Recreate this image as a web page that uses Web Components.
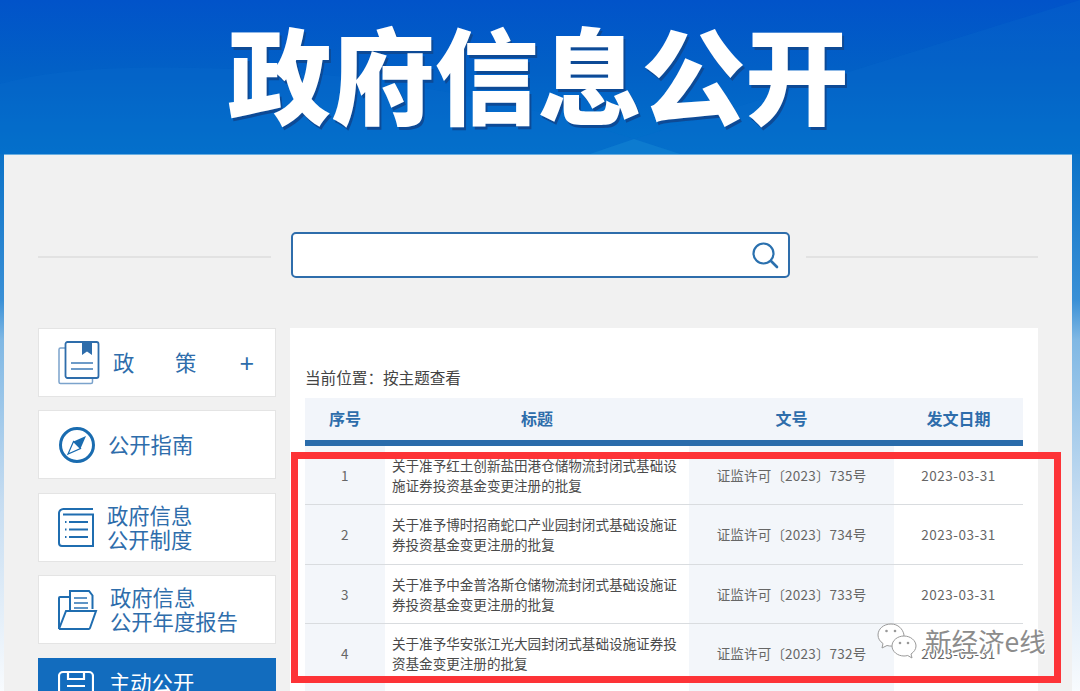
<!DOCTYPE html>
<html lang="zh">
<head>
<meta charset="utf-8">
<title>政府信息公开</title>
<style>
  html, body { margin: 0; height: 691px; overflow: hidden; background: #1070c4; }
  body { font-family: "Noto Sans CJK SC", "Liberation Sans", sans-serif; }
</style>
</head>
<body>
<gov-page></gov-page>

<script>
/* ================= ICONS ================= */
const ICONS = {
  book: `<svg width="42" height="44" viewBox="0 0 42 44" fill="none" stroke="#2e6dab" stroke-width="1.5">
    <path d="M7 7H2.500A1.500 1.500 0 0 0 1 8.500V41a1.500 1.500 0 0 0 1.500 1.500H33a1.500 1.500 0 0 0 1.500-1.500V37.500" stroke="#7ba3cc"/>
    <rect x="7.500" y="1" width="33" height="36" rx="2" stroke-width="1.800"/>
    <path d="M24 1h10v13l-5-3.500-5 3.500z" fill="#2e6dab" stroke="none"/>
    <path d="M13 22h22M13 28h22" stroke="#6d9bc8" stroke-width="1.800"/>
  </svg>`,
  compass: `<svg width="38" height="38" viewBox="0 0 38 38" fill="none">
    <circle cx="19" cy="19" r="16.500" stroke="#1a6cb0" stroke-width="3"/>
    <path d="M28 10 22.500 22.500 10 28l5.500-12.500z" fill="#1a6cb0"/>
    <path d="M15.500 15.500 22.500 22.500 10 28z" fill="#fff" stroke="#1a6cb0" stroke-width="1.200"/>
  </svg>`,
  list: `<svg width="36" height="40" viewBox="0 0 36 40" fill="none" stroke="#1f6db0" stroke-width="2">
    <path d="M35 2H6a4.500 4.500 0 0 0-5 5v29a3 3 0 0 0 3 3h31V7.500H5"/>
    <path d="M11 15h19M11 22.500h19M11 30h19"/>
    <path d="M7 15h1.500M7 22.500h1.500M7 30h1.500"/>
  </svg>`,
  folder: `<svg width="40" height="42" viewBox="0 0 40 42" fill="none" stroke="#1f6db0" stroke-width="2">
    <path d="M12 23V2h19l3.500 4.500V20"/>
    <path d="M16 9h13M16 14h14M16 19h14" stroke-width="2.200" stroke="#5f95c6"/>
    <path d="M11 8H2a1 1 0 0 0-1 1v31l7-18h30l-6 17a1.500 1.500 0 0 1-1.500 1H1"/>
  </svg>`,
  clip: `<svg width="36" height="40" viewBox="0 0 36 40" fill="none" stroke="#fff" stroke-width="2.200">
    <rect x="1" y="2" width="34" height="37" rx="4"/>
    <path d="M10 2v7h16V2M9 16h18"/>
  </svg>`
};

/* ================= BANNER ================= */
class GovBanner extends HTMLElement {
  constructor() {
    super();
    this.attachShadow({ mode: "open" });
    this.shadowRoot.innerHTML = `
      <style>
        :host {
          display: flex;
          justify-content: center;
          align-items: flex-start;
          height: 154px;
          position: relative;
          overflow: hidden;
          background: linear-gradient(180deg, #0153c9 0%, #0260c6 45%, #0272cb 100%);
        }
        svg { position: absolute; inset: 0; }
        h1 {
          position: relative;
          margin: 0 4px 0 0;
          font: 900 104px/144px "Noto Sans CJK SC", sans-serif;
          letter-spacing: -0.5px;
          color: #fff;
          text-shadow: 2px 3px 0 #0d4a96;
          white-space: nowrap;
        }
      </style>
      <svg width="1080" height="154" viewBox="0 0 1080 154">
        <path d="M0 84C70 64 170 66 260 70C420 78 560 115 634 139L1080 0V154H0z" fill="#0a6ccb" opacity=".28"/>
        <path d="M590 154 634 139 680 154z" fill="#1b8ed6" opacity=".4"/>
      </svg>
      <h1><slot></slot></h1>
    `;
  }
}
customElements.define("gov-banner", GovBanner);

/* ================= SEARCH ================= */
class GovSearch extends HTMLElement {
  constructor() {
    super();
    this.attachShadow({ mode: "open" });
    this.shadowRoot.innerHTML = `
      <style>
        :host { display: flex; align-items: center; padding: 0 34px; }
        .rule { flex: 1; height: 2px; margin-top: 3px; background: #e2e2e2; }
        .box {
          flex: none;
          margin: 0 16px 0 20px;
          background: #fff;
          border: 2px solid #2e6dab;
          border-radius: 5px;
          display: flex;
          align-items: center;
          justify-content: flex-end;
          padding-right: 9px;
          box-sizing: border-box;
          height: 46px;
          width: 499px;
        }
      </style>
      <div class="rule"></div>
      <div class="box">
        <svg width="28" height="28" viewBox="0 0 28 28" fill="none" stroke="#2a70ae" stroke-width="2.200">
          <circle cx="12.500" cy="12.500" r="10"/>
          <path d="M20 20l6 6" stroke-linecap="round" stroke-width="2.600"/>
        </svg>
      </div>
      <div class="rule"></div>
    `;
  }
}
customElements.define("gov-search", GovSearch);

/* ================= SIDEBAR ITEM ================= */
class SideItem extends HTMLElement {
  constructor() {
    super();
    this.attachShadow({ mode: "open" });
    const active = this.hasAttribute("active");
    const plus = this.hasAttribute("plus") ? `<span class="plus">+</span>` : "";
    this.shadowRoot.innerHTML = `
      <style>
        :host {
          display: flex;
          align-items: center;
          box-sizing: border-box;
          width: 238px;
          height: 69px;
          padding-left: 19px;
          background: ${active ? "#126cbe" : "#fff"};
          border: 1px solid ${active ? "#126cbe" : "#e4e4e4"};
          color: ${active ? "#fff" : "#2e6dab"};
          font-size: 21.300px;
          line-height: 24px;
          position: relative;
        }
        .icon { width: 42px; flex: none; display: flex; padding-bottom: ${active ? 4 : 0}px; }
        .text { margin-left: var(--gap, 8px); white-space: pre-line; padding-bottom: ${active ? 20 : 1}px; }
        .plus {
          position: absolute;
          right: 21px;
          top: 20px;
          font: 400 25px/28px "Liberation Sans", sans-serif;
          letter-spacing: 0;
        }
      </style>
      <div class="icon">${ICONS[this.getAttribute("icon")]}</div>
      <div class="text"><slot></slot></div>
      ${plus}
    `;
  }
}
customElements.define("side-item", SideItem);

/* ================= TABLE ROW ================= */
class DocRow extends HTMLElement {
  constructor() {
    super();
    this.attachShadow({ mode: "open" });
    const a = n => this.getAttribute(n) || "";
    this.shadowRoot.innerHTML = `
      <style>
        :host {
          display: grid;
          grid-template-columns: 80px 304px 205px 129px;
          height: 59.300px;
          box-sizing: border-box;
          border-bottom: 1px solid #d9dcdf;
          color: #666;
          font-size: 13.500px;
          text-align: center;
        }
        div { display: flex; align-items: center; justify-content: center; }
        .shade { background: #f3f6fa; }
        .title {
          justify-content: flex-start;
          text-align: left;
          padding: 0 4px 0 7px;
          color: #4a4a4a;
          font-size: 13.570px;
          line-height: 20px;
        }
        .code { letter-spacing: .2px; }
        .num { letter-spacing: .5px; }
      </style>
      <div class="shade num">${a("n")}</div>
      <div class="title"><slot></slot></div>
      <div class="shade code">${a("code")}</div>
      <div class="num">${a("date")}</div>
    `;
  }
}
customElements.define("doc-row", DocRow);

/* ================= TABLE HEAD ================= */
class DocHead extends HTMLElement {
  constructor() {
    super();
    this.attachShadow({ mode: "open" });
    this.shadowRoot.innerHTML = `
      <style>
        :host {
          display: grid;
          grid-template-columns: 80px 304px 205px 129px;
          height: 48px;
          box-sizing: border-box;
          padding-bottom: 3px;
          background: linear-gradient(#f2f5fa, #f2f5fa) no-repeat top / 100% 42px;
          border-bottom: 6px solid #2a6cab;
          color: #2e6dab;
          font-size: 16px;
          font-weight: 700;
        }
        span { display: flex; align-items: center; justify-content: center; }
      </style>
      <span>序号</span><span>标题</span><span>文号</span><span>发文日期</span>
    `;
  }
}
customElements.define("doc-head", DocHead);

/* ================= PAGE ================= */
class GovPage extends HTMLElement {
  constructor() {
    super();
    this.attachShadow({ mode: "open" });
    this.shadowRoot.innerHTML = `
      <style>
        :host {
          display: block;
          position: relative;
          height: 691px;
          overflow: hidden;
          background: linear-gradient(180deg, #0b72c8 154px, #3a90d6 300px, #80b8e4 340px, #c5dcf1 500px, #f8fbfe 691px);
        }
        .panel {
          margin: 0 8px 0 4px;
          height: 537px;
          box-sizing: border-box;
          padding-top: 77px;
          background: #f1f1f1;
          border-top: 1px solid #6aaee0;
        }
        .columns { display: flex; gap: 14px; padding: 50px 34px 0; }
        .side { display: flex; flex-direction: column; gap: 13.400px; width: 238px; flex: none; }
        .main {
          flex: 1;
          height: 400px;
          box-sizing: border-box;
          padding: 39px 15px 0;
          background: #fff;
        }
        .where {
          font-family: "Noto Sans CJK TC", "Noto Sans CJK SC", sans-serif;
          font-size: 15.600px;
          line-height: 20px;
          height: 31px;
          color: #444;
        }
        .mark {
          position: absolute;
          left: 291px; top: 452px;
          width: 770px; height: 231px;
          box-sizing: border-box;
          border: 7px solid #fd3337;
        }
        .stamp {
          position: absolute;
          left: 877px; top: 623px;
          display: flex;
          align-items: center;
          gap: 6px;
          color: #8c8c8c;
          font-size: 26.500px;
          line-height: 36px;
          text-shadow: 0 0 1px #fff, 1px 1px 0 #fff, -1px -1px 0 #fff;
          white-space: nowrap;
        }
      </style>

      <gov-banner>政府信息公开</gov-banner>

      <div class="panel">
        <gov-search></gov-search>
        <div class="columns">
          <div class="side">
            <side-item icon="book" plus style="--gap:13px;letter-spacing:40.700px">政策</side-item>
            <side-item icon="compass" style="--gap:8px">公开指南</side-item>
            <side-item icon="list" style="--gap:7px">政府信息
公开制度</side-item>
            <side-item icon="folder" style="--gap:10px">政府信息
公开年度报告</side-item>
            <side-item icon="clip" active style="--gap:9px">主动公开</side-item>
          </div>
          <div class="main">
            <div class="where">当前位置：按主题查看</div>
            <doc-head></doc-head>
            <doc-row n="1" code="证监许可〔2023〕735号" date="2023-03-31">关于准予红土创新盐田港仓储物流封闭式基础设施证券投资基金变更注册的批复</doc-row>
            <doc-row n="2" code="证监许可〔2023〕734号" date="2023-03-31">关于准予博时招商蛇口产业园封闭式基础设施证券投资基金变更注册的批复</doc-row>
            <doc-row n="3" code="证监许可〔2023〕733号" date="2023-03-31">关于准予中金普洛斯仓储物流封闭式基础设施证券投资基金变更注册的批复</doc-row>
            <doc-row n="4" code="证监许可〔2023〕732号" date="2023-03-31">关于准予华安张江光大园封闭式基础设施证券投资基金变更注册的批复</doc-row>
            <doc-row></doc-row>
          </div>
        </div>
      </div>

      <div class="mark"></div>

      <div class="stamp">
        <svg width="42" height="36" viewBox="0 0 42 36" fill="#fff" stroke="#9a9a9a" stroke-width="1">
          <path d="M14 1C6.500 1 1 6 1 12c0 3.500 2 6.500 5 8.500L5 25l5-2.500c1.500.4 3 .6 4.500.6C20 23 26 19 27 12 26 6 21 1 14 1z"/>
          <path d="M27 13c-6.500 0-12 4.500-12 10s5.500 10 12 10c1.300 0 2.500-.2 3.700-.5L35 35l-1-4c3-2 5-4.800 5-8 0-5.500-5.500-10-12-10z"/>
          <circle cx="9.500" cy="8" r="1.300" fill="#999" stroke="none"/>
          <circle cx="18" cy="8" r="1.300" fill="#999" stroke="none"/>
          <circle cx="23" cy="20" r="1.300" fill="#999" stroke="none"/>
          <circle cx="31" cy="20" r="1.300" fill="#999" stroke="none"/>
        </svg>
        <span>新经济e线</span>
      </div>
    `;
  }
}
customElements.define("gov-page", GovPage);
</script>
</body>
</html>
